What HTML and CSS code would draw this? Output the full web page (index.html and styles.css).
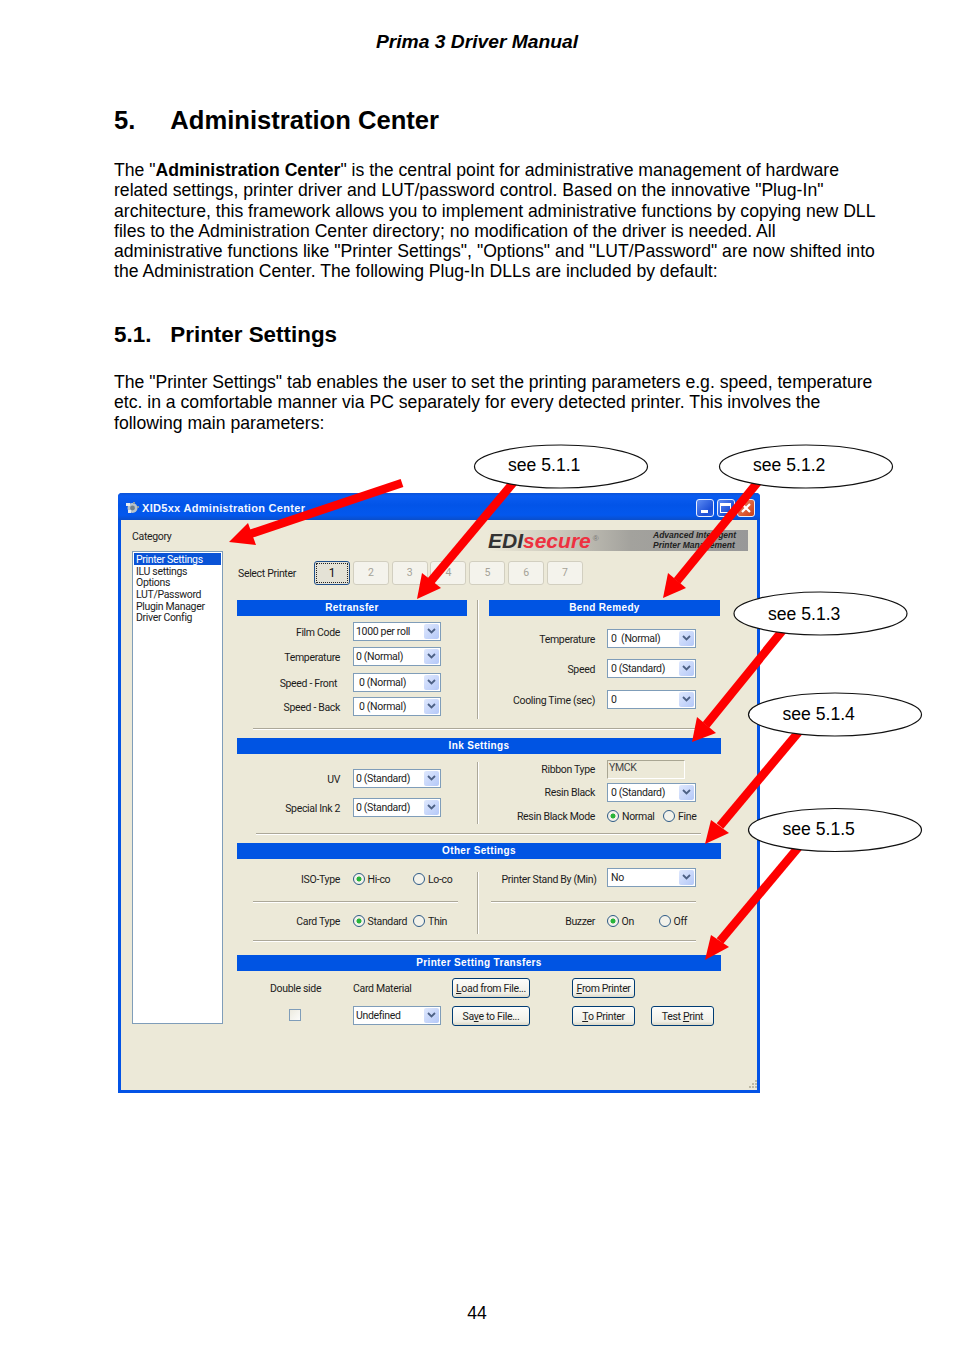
FILE: index.html
```html
<!DOCTYPE html>
<html lang="en">
<head>
<meta charset="utf-8">
<title>Prima 3 Driver Manual</title>
<link rel="stylesheet" href="styles.css">
</head>
<body>
<div class="page">
  <header class="running-head">Prima 3 Driver Manual</header>
  <h1 class="h1"><span class="num">5.</span>Administration Center</h1>
  <p class="para">The "<b>Administration Center</b>" is the central point for administrative management of hardware<br>related settings, printer driver and LUT/password control. Based on the innovative "Plug-In"<br>architecture, this framework allows you to implement administrative functions by copying new DLL<br>files to the Administration Center directory; no modification of the driver is needed. All<br>administrative functions like "Printer Settings", "Options" and "LUT/Password" are now shifted into<br>the Administration Center. The following Plug-In DLLs are included by default:</p>
  <h2 class="h2"><span class="num">5.1.</span>Printer Settings</h2>
  <p class="para para-2">The "Printer Settings" tab enables the user to set the printing parameters e.g. speed, temperature<br>etc. in a comfortable manner via PC separately for every detected printer. This involves the<br>following main parameters:</p>

  <div class="window">
    <div class="titlebar">
      <svg class="app-icon" viewBox="0 0 14 13"><circle cx="7.5" cy="7" r="5" fill="#b9c4cc"/><circle cx="7.5" cy="7" r="2.4" fill="#6f7f8c"/><path d="M1 2h4v3H1zM3 9h3v3H3z" fill="#e6ecf0"/><path d="M8 1h2v2H8zM12 5h2v2h-2z" fill="#8d9aa5"/></svg>
      <span class="title">XID5xx Administration Center</span>
      <span class="caps">
        <span class="cap"><i class="cap-min"></i></span>
        <span class="cap"><i class="cap-max"></i></span>
        <span class="cap cap-close"><svg viewBox="0 0 12 12"><path d="M2 2l8 8M10 2l-8 8"/></svg></span>
      </span>
    </div>
    <div class="win-body">
      <aside class="side">
        <div class="cat-label">Category</div>
        <ul class="list">
          <li class="on">Printer Settings</li>
          <li>ILU settings</li>
          <li>Options</li>
          <li>LUT/Password</li>
          <li>Plugin Manager</li>
          <li>Driver Config</li>
        </ul>
      </aside>
      <main class="main">
        <div class="brand">
          <span class="logo"><span class="edi">EDI</span><span class="secure">secure</span><sup class="reg">®</sup></span>
          <span class="tag">Advanced Intelligent<br>Printer Management</span>
        </div>
        <div class="printers">
          <span class="printers-label">Select Printer</span>
          <span class="pbtn active">1</span><span class="pbtn">2</span><span class="pbtn">3</span><span class="pbtn">4</span><span class="pbtn">5</span><span class="pbtn">6</span><span class="pbtn">7</span>
        </div>

        <div class="split split-top">
          <section>
            <h3 class="bar">Retransfer</h3>
            <div class="form form-l rows-retransfer">
              <label>Film Code</label><span class="sel"><span class="val">1000 per roll</span><span class="drop"><svg viewBox="0 0 9 6"><path d="M1 1l3.5 3.5L8 1"/></svg></span></span>
              <label>Temperature</label><span class="sel"><span class="val">0 (Normal)</span><span class="drop"><svg viewBox="0 0 9 6"><path d="M1 1l3.5 3.5L8 1"/></svg></span></span>
              <label class="nudge">Speed - Front</label><span class="sel"><span class="val ind">0 (Normal)</span><span class="drop"><svg viewBox="0 0 9 6"><path d="M1 1l3.5 3.5L8 1"/></svg></span></span>
              <label>Speed - Back</label><span class="sel"><span class="val ind">0 (Normal)</span><span class="drop"><svg viewBox="0 0 9 6"><path d="M1 1l3.5 3.5L8 1"/></svg></span></span>
            </div>
          </section>
          <div class="vline"></div>
          <section>
            <h3 class="bar">Bend Remedy</h3>
            <div class="form form-r rows-bend">
              <label>Temperature</label><span class="sel"><span class="val ind2">0 &nbsp;(Normal)</span><span class="drop"><svg viewBox="0 0 9 6"><path d="M1 1l3.5 3.5L8 1"/></svg></span></span>
              <label>Speed</label><span class="sel"><span class="val ind2">0 (Standard)</span><span class="drop"><svg viewBox="0 0 9 6"><path d="M1 1l3.5 3.5L8 1"/></svg></span></span>
              <label>Cooling Time (sec)</label><span class="sel"><span class="val ind2">0</span><span class="drop"><svg viewBox="0 0 9 6"><path d="M1 1l3.5 3.5L8 1"/></svg></span></span>
            </div>
          </section>
        </div>
        <div class="rule rule-1"></div>

        <h3 class="bar bar-wide">Ink Settings</h3>
        <div class="split split-ink">
          <div class="form form-l rows-ink-l">
            <label>UV</label><span class="sel"><span class="val">0 (Standard)</span><span class="drop"><svg viewBox="0 0 9 6"><path d="M1 1l3.5 3.5L8 1"/></svg></span></span>
            <label>Special Ink 2</label><span class="sel"><span class="val">0 (Standard)</span><span class="drop"><svg viewBox="0 0 9 6"><path d="M1 1l3.5 3.5L8 1"/></svg></span></span>
          </div>
          <div class="vline"></div>
          <div class="form form-r rows-ink-r">
            <label>Ribbon Type</label><span class="readonly">YMCK</span>
            <label>Resin Black</label><span class="sel"><span class="val ind2">0 (Standard)</span><span class="drop"><svg viewBox="0 0 9 6"><path d="M1 1l3.5 3.5L8 1"/></svg></span></span>
            <label>Resin Black Mode</label><span class="radios"><span class="opt w-normal"><i class="radio checked"></i>Normal</span><span class="opt"><i class="radio"></i>Fine</span></span>
          </div>
        </div>
        <div class="rule rule-2"></div>

        <h3 class="bar bar-wide">Other Settings</h3>
        <div class="split split-other">
          <div class="col-other">
            <div class="form form-l line-iso">
              <label>ISO-Type</label><span class="radios"><span class="opt w-hico"><i class="radio checked"></i>Hi-co</span><span class="opt"><i class="radio"></i>Lo-co</span></span>
            </div>
            <div class="rule rule-l"></div>
            <div class="form form-l line-card">
              <label>Card Type</label><span class="radios"><span class="opt w-hico"><i class="radio checked"></i>Standard</span><span class="opt"><i class="radio"></i>Thin</span></span>
            </div>
          </div>
          <div class="vline"></div>
          <div class="col-other">
            <div class="form form-r line-stand">
              <label class="wide-label">Printer Stand By (Min)</label><span class="sel"><span class="val ind2">No</span><span class="drop"><svg viewBox="0 0 9 6"><path d="M1 1l3.5 3.5L8 1"/></svg></span></span>
            </div>
            <div class="rule rule-r"></div>
            <div class="form form-r line-card">
              <label>Buzzer</label><span class="radios"><span class="opt w-on"><i class="radio checked"></i>On</span><span class="opt"><i class="radio"></i>Off</span></span>
            </div>
          </div>
        </div>
        <div class="rule rule-3"></div>

        <h3 class="bar bar-wide">Printer Setting Transfers</h3>
        <div class="transfers">
          <span class="cell-ds">Double side</span>
          <span class="cell-text">Card Material</span>
          <span class="btn btn-file"><u>L</u>oad from File...</span>
          <span class="btn"><u>F</u>rom Printer</span>
          <span></span>
          <span class="cell-check"><i class="check"></i></span>
          <span class="sel"><span class="val">Undefined</span><span class="drop"><svg viewBox="0 0 9 6"><path d="M1 1l3.5 3.5L8 1"/></svg></span></span>
          <span class="btn btn-file">Sa<u>v</u>e to File...</span>
          <span class="btn"><u>T</u>o Printer</span>
          <span class="btn">Test <u>P</u>rint</span>
        </div>
      </main>
    </div>
    <svg class="grip" viewBox="0 0 10 10"><path d="M8 1h2v2H8zM5 4h2v2H5zM8 4h2v2H8zM2 7h2v2H2zM5 7h2v2H5zM8 7h2v2H8z" fill="#bdb9a5"/></svg>
  </div>

  <footer class="page-num">44</footer>

  <svg class="overlay" viewBox="0 0 954 1350" width="954" height="1350">
    <g class="arrows">
      <line x1="402" y1="483" x2="250" y2="534"/><polygon points="229,542 248,523 256,545"/>
      <line x1="518" y1="477" x2="431" y2="581"/><polygon points="417,599 422,573 441,588"/>
      <line x1="762" y1="477" x2="677" y2="581"/><polygon points="663,598 668,573 686,588"/>
      <line x1="787" y1="625" x2="706" y2="725"/><polygon points="692,742 697,717 716,733"/>
      <line x1="802" y1="728" x2="720" y2="826"/><polygon points="705,844 711,820 729,833"/>
      <line x1="802" y1="843" x2="720" y2="941"/><polygon points="705,960 711,935 729,947"/>
    </g>
    <g class="callouts">
      <ellipse cx="561" cy="466.5" rx="86.5" ry="21.5"/><text x="508" y="471">see 5.1.1</text>
      <ellipse cx="806" cy="466.5" rx="86.5" ry="21.5"/><text x="753" y="471">see 5.1.2</text>
      <ellipse cx="820.5" cy="613.5" rx="86.5" ry="21.5"/><text x="768" y="619.5">see 5.1.3</text>
      <ellipse cx="835" cy="714.5" rx="86.5" ry="21.5"/><text x="782.5" y="720">see 5.1.4</text>
      <ellipse cx="835" cy="830" rx="86.5" ry="21.5"/><text x="782.5" y="835">see 5.1.5</text>
    </g>
  </svg>
</div>
</body>
</html>
```
FILE: styles.css
```css
* { box-sizing: border-box; }
html, body { margin: 0; padding: 0; background: #fff; }
body { font-family: "Liberation Sans", Arial, sans-serif; color: #000; }
.page { position: relative; width: 954px; height: 1350px; padding: 31px 0 0 114px; overflow: hidden; }

.running-head { margin-left: -114px; width: 954px; text-align: center; font-weight: bold; font-style: italic; font-size: 19.25px; line-height: 22px; }
.h1 { margin: 52px 0 0; font-size: 25.6px; line-height: 30px; font-weight: bold; }
.h2 { margin: 40.4px 0 0; font-size: 22.4px; line-height: 26px; font-weight: bold; }
.num { display: inline-block; width: 56.3px; }
.para { margin: 25.15px 0 0; font-size: 17.62px; line-height: 20.2px; white-space: nowrap; }
.para-2 { margin-top: 24.45px; }
.page-num { margin: 210px 0 0 -114px; width: 954px; text-align: center; font-size: 17.6px; line-height: 20px; }

/* window */
.window { position: relative; margin: 60.2px 0 0 4px; width: 642px; height: 600px; background: #ece9d8; border: 3px solid #0353e6; border-top: 0; border-radius: 4px 4px 0 0; font-family: Roboto, "Liberation Sans", sans-serif; font-size: 10.5px; letter-spacing: -.33px; color: #1c1c1c; }
.titlebar { display: flex; align-items: center; height: 27px; margin: 0 -3px; padding: 3px 5px 0 7px; border-radius: 4px 4px 0 0; background: linear-gradient(#0b52d8 0, #0a5cf0 3px, #0254e8 12px, #0358ee 22px, #0a4ecb 27px); color: #fff; }
.app-icon { width: 14px; height: 13px; margin-right: 3px; }
.title { margin-top: 1px; font-family: "Liberation Sans", sans-serif; font-weight: bold; font-size: 11px; letter-spacing: .3px; color: #f2f6ff; }
.caps { display: flex; gap: 2.5px; margin-left: auto; }
.cap { display: flex; align-items: center; justify-content: center; width: 18px; height: 18px; border: 1px solid #e8eefc; border-radius: 3px; background: linear-gradient(135deg, #5d8cf3, #1c4fd6 70%, #2a5fe0); }
.cap-min { width: 7px; height: 3px; background: #fff; margin-top: 8px; margin-right: 2px; }
.cap-max { width: 11px; height: 10px; border: 1px solid #fff; border-top-width: 3px; }
.cap-close { background: linear-gradient(135deg, #e9906e, #d9512a 70%, #c63f18); }
.cap-close svg { width: 12px; height: 12px; fill: none; stroke: #fff; stroke-width: 2.2; }

.win-body { display: flex; padding-left: 11px; }
.side { width: 91px; flex: none; }
.cat-label { height: 31px; padding-top: 10px; line-height: 14px; }
.list { margin: 0; padding: 1px 1px; list-style: none; height: 473px; background: #fff; border: 1px solid #7f9db9; }
.list li { height: 11.7px; line-height: 13.5px; padding-left: 2px; white-space: nowrap; }
.list li.on { background: #0a53d6; color: #fff; }

.main { margin-left: 14px; width: 511px; flex: none; }
.brand { display: flex; justify-content: space-between; align-items: center; margin: 10px 0 0 251px; height: 21px; background: linear-gradient(90deg, #ece9d8 0, #cfccbf 25%, #a3a29d 55%, #989898 100%); font-family: "Liberation Sans", sans-serif; font-weight: bold; font-style: italic; letter-spacing: 0; }
.logo { font-size: 21px; line-height: 21px; }
.edi { color: #333; }
.secure { color: #ee3040; }
.reg { font-size: 8px; font-style: normal; font-weight: normal; color: #777; vertical-align: 7px; line-height: 0; margin-left: 2px; }
.tag { width: 95px; font-size: 8.5px; line-height: 10px; color: #222; white-space: nowrap; }

.printers { display: flex; align-items: center; gap: 2.8px; margin-top: 10px; height: 24px; }
.printers-label { width: 74.2px; padding: 2px 0 0 1px; }
.pbtn { display: flex; align-items: center; justify-content: center; width: 36px; height: 24px; border: 1px solid #d2cfc0; border-radius: 3px; background: #f4f3ec; color: #a5a297; }
.pbtn.active { border-color: #1f4f8a; background: #e4e2d6; color: #111; outline: 1px dotted #222; outline-offset: -3px; font-size: 12px; }

.bar { margin: 0; height: 16px; background: #0054e3; color: #fff; text-align: center; font-family: "Liberation Sans", sans-serif; font-weight: bold; font-size: 10px; line-height: 15px; letter-spacing: .35px; }
.bar-wide { width: 484px; }

.split { display: grid; grid-template-columns: 230px 22px 231px; }
.vline { justify-self: center; width: 2px; background: #aca899; border-right: 1px solid #fff; }
.split-top { margin-top: 15px; height: 119px; }
.split-ink { height: 79px; }
.split-ink .vline { margin-top: 8px; height: 62px; }
.split-other { height: 81px; }
.split-other .vline { margin-top: 13px; height: 62px; }

.rule { height: 2px; background: #aca899; border-bottom: 1px solid #fff; }
.rule-1 { margin: 9px 0 8px 16px; width: 448px; }
.rule-2 { margin: 0 0 8px 19px; width: 445px; }
.rule-3 { margin: 0 0 13px 16px; width: 443px; }
.rule-l { margin-left: 16px; width: 205px; }
.rule-r { margin-left: 2px; width: 205px; }

.form { display: grid; align-items: center; }
.form-l { grid-template-columns: 103px 88px; column-gap: 13px; }
.form-r { grid-template-columns: 106px 89px; column-gap: 12px; }
.form label { text-align: right; white-space: nowrap; line-height: 21px; }
.wide-label { margin-right: -1.5px; }
.nudge { padding-right: 3px; }
.rows-retransfer { grid-template-rows: 25px 26px 24px 19px; margin-top: 6px; align-items: start; }
.rows-bend { grid-template-rows: 30px 31px 19px; margin-top: 13px; align-items: start; }
.rows-retransfer label, .rows-bend label { line-height: 22px; }
.rows-ink-l { grid-template-rows: 29px 19px; margin-top: 15px; align-items: start; }
.rows-ink-r { grid-template-rows: 23px 24px 18px; margin-top: 6px; align-items: start; }
.rows-ink-r label { line-height: 20px; }
.col-other { display: flex; flex-direction: column; }
.line-iso { height: 42px; padding-top: 11px; align-items: start; }
.line-stand { height: 42px; padding-top: 9px; align-items: start; }
.line-card { height: 37px; padding-top: 9px; align-items: start; }
.line-iso label, .line-card label { line-height: 20px; }
.line-stand label { line-height: 23px; }

.sel { display: flex; align-items: center; justify-content: space-between; height: 19px; padding-right: 1px; background: #fff; border: 1px solid #7f9db9; white-space: nowrap; overflow: hidden; }
.val { padding-left: 2px; }
.val.ind { padding-left: 5px; }
.val.ind2 { padding-left: 3px; }
.drop { display: flex; align-items: center; justify-content: center; flex: none; width: 15px; height: 15px; border-radius: 2px; background: linear-gradient(135deg, #dfe8fd, #b4c8f8); }
.drop svg { width: 9px; height: 6px; fill: none; stroke: #4d6185; stroke-width: 1.8; }
.readonly { width: 78px; height: 19px; padding-left: 1px; line-height: 13px; border: 1px solid #fff; border-top-color: #a9a693; border-left-color: #a9a693; color: #444; }

.radios { display: flex; align-items: center; height: 19px; white-space: nowrap; }
.opt { display: flex; flex: none; align-items: center; gap: 3px; }
.radio { flex: none; width: 12px; height: 12px; border: 1px solid #2d5a86; border-radius: 50%; background: #f3f2ea; }
.radio.checked { background: radial-gradient(circle, #28b43a 0 2.2px, #f3f2ea 2.8px); }
.w-normal { width: 56px; }
.w-hico { width: 60.5px; }
.w-on { width: 52px; }
.line-iso .radios, .line-card .radios { margin-left: -.5px; }

.transfers { display: grid; grid-template-columns: 116px 99px 120px 79px 63px; grid-template-rows: 28px 20px; align-items: start; margin-top: 7px; white-space: nowrap; }
.cell-ds { padding-left: 33px; line-height: 21px; }
.cell-text { line-height: 21px; }
.cell-check { padding: 3px 0 0 52px; }
.check { display: block; width: 12px; height: 12px; border: 1px solid #7f9db9; background: linear-gradient(135deg, #eceadf, #fcfcfa); }
.transfers .sel { width: 88px; }
.btn { display: flex; align-items: center; justify-content: center; width: 63px; height: 20px; padding-top: 1px; border: 1px solid #003c74; border-radius: 3px; background: linear-gradient(#fdfdfb, #f0efe6 80%, #dcd8c8); white-space: pre; }
.btn-file { width: 78px; }

.grip { position: absolute; right: 0; bottom: 1px; width: 10px; height: 10px; }

.overlay { position: absolute; left: 0; top: 0; pointer-events: none; }
.arrows line { stroke: #fe0000; stroke-width: 8.5; }
.arrows polygon { fill: #fe0000; }
.callouts ellipse { fill: #fff; stroke: #111; stroke-width: 1.2; }
.callouts text { font-family: "Liberation Sans", Arial, sans-serif; font-size: 17.6px; fill: #000; }
```
